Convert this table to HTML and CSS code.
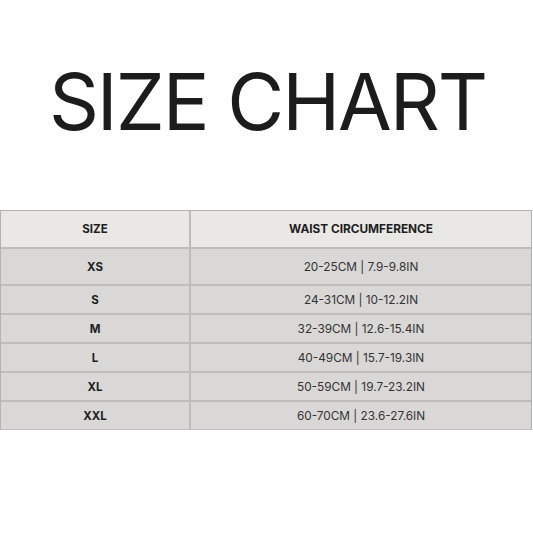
FILE: index.html
```html
<!DOCTYPE html>
<html>
<head>
<meta charset="utf-8">
<link rel="stylesheet" href="styles.css">
</head>
<body>
<div class="page">
  <h1 class="title">SIZE CHART</h1>
  <div class="chart">
    <div class="row head"><div class="c1">SIZE</div><div class="c2">WAIST CIRCUMFERENCE</div></div>
    <div class="row tall"><div class="c1">XS</div><div class="c2">20-25CM | 7.9-9.8IN</div></div>
    <div class="row"><div class="c1">S</div><div class="c2">24-31CM | 10-12.2IN</div></div>
    <div class="row"><div class="c1">M</div><div class="c2">32-39CM | 12.6-15.4IN</div></div>
    <div class="row"><div class="c1">L</div><div class="c2">40-49CM | 15.7-19.3IN</div></div>
    <div class="row"><div class="c1">XL</div><div class="c2">50-59CM | 19.7-23.2IN</div></div>
    <div class="row"><div class="c1">XXL</div><div class="c2">60-70CM | 23.6-27.6IN</div></div>
  </div>
</div>
</body>
</html>
```
FILE: styles.css
```css
html, body { margin: 0; padding: 0; background: #fff; }
.page { width: 533px; height: 533px; font-family: Inter, "Liberation Sans", sans-serif; color: #1f1f1f; }
.title {
  margin: 0;
  padding-top: 59px;
  padding-left: 2px;
  height: 152px;
  box-sizing: border-box;
  font-weight: 400;
  font-size: 78px;
  line-height: 86px;
  text-align: center;
  letter-spacing: -2.1px;
  color: #1c1c1c;
}
.chart {
  width: 532px;
  border: 1px solid #b3b2b0;
  border-bottom: 1px solid #bdbcba;
  box-sizing: border-box;
  margin-top: 58px;
}
.row {
  display: grid;
  grid-template-columns: 190px 1fr;
  height: 29px;
  background: #d9d8d6;
  border-top: 2px solid #bebdbb;
  box-sizing: border-box;
  font-size: 11.8px;
  color: #333;
}
.row.head { border-top: none; height: 36px; background: #e9e8e5; font-weight: 700; font-size: 11.8px; color: #1e1e1e; }
.row.tall { height: 37px; }
.row > div { display: flex; align-items: center; justify-content: center; }
.c1 { font-weight: 700; font-size: 11.5px; color: #1e1e1e; border-right: 2px solid #bdbcba; }
.c2 { letter-spacing: 0; }
```
